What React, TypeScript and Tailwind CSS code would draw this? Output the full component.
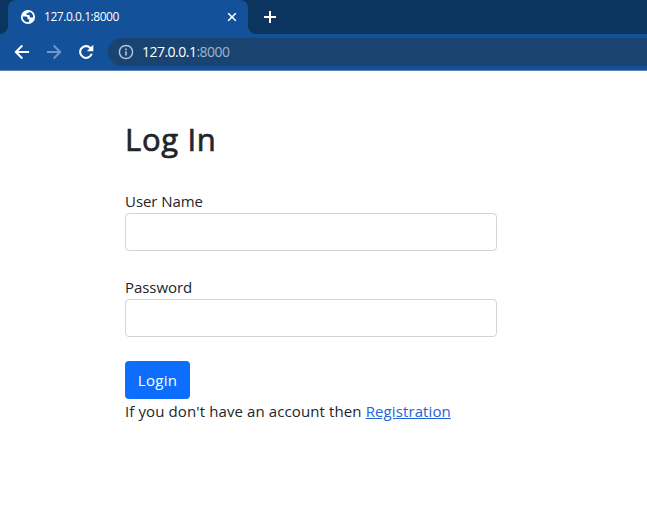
function Icon({ d, className }: { d: string; className: string }) {
  return (
    <svg viewBox="0 0 24 24" fill="currentColor" className={`block shrink-0 ${className}`}>
      <path d={d} />
    </svg>
  );
}

function TabStrip() {
  return (
    <div className="flex h-[34px] bg-[#0b355f]">
      <div className="flex w-2 items-end bg-[#13519a]">
        <div className="h-full w-full rounded-br-lg bg-[#0b355f]" />
      </div>
      <div className="flex w-[240px] items-center rounded-t-lg bg-[#13519a] pl-3 pr-[10px]">
        <svg viewBox="0 0 16 16" className="mr-2 block size-4 shrink-0">
          <circle cx="8" cy="8" r="7.1" fill="#fff" />
          <path
            d="M2.7 7.6H5.2C7 7.6 7.6 8.2 7.6 9.3V10.2H9.2V12.4L8.2 13.3C5 13.4 2.6 11 2.7 7.6ZM9.8 3C8.7 3.1 8.2 3.6 8.2 4.3H6.6V6.1H8.9C9.6 6.1 9.7 6.5 9.7 7.2 9.7 8.1 10.2 8.6 11 8.6H13.2C13.4 5.8 12 3.8 9.8 3Z"
            fill="#13519a"
          />
        </svg>
        <span className="whitespace-nowrap font-['Open_Sans','Noto_Sans',sans-serif] text-[12px] leading-4 tracking-[-0.45px] text-white">
          127.0.0.1:8000
        </span>
        <svg viewBox="0 0 12 12" className="ml-auto block size-3" stroke="#fff" strokeWidth="1.6">
          <path d="m2.2 2.2 7.6 7.6m0-7.6L2.2 9.8" />
        </svg>
      </div>
      <div className="flex flex-1 bg-[#13519a]">
        <div className="flex h-full flex-1 items-center rounded-bl-lg bg-[#0b355f] pl-[15px]">
          <svg viewBox="0 0 14 14" className="block size-[14px]" stroke="#fff" strokeWidth="2">
            <path d="M7 1v12M1 7h12" />
          </svg>
        </div>
      </div>
    </div>
  );
}

function Toolbar() {
  return (
    <div className="flex h-[37px] items-center border-b border-[#5b83b5] bg-[#13519a] pl-3">
      <Icon className="size-5 text-white" d="M20.5 10.8H7.5l5.7-5.7L11.5 3.4 2.9 12l8.6 8.6 1.7-1.7-5.7-5.7h13z" />
      <Icon className="ml-3 size-5 text-[#6f97c8]" d="M3.5 10.8h13l-5.7-5.7 1.7-1.7 8.6 8.6-8.6 8.6-1.7-1.7 5.7-5.7h-13z" />
      <Icon
        className="ml-3 size-5 text-white"
        d="M17.9 6.1A8.3 8.3 0 1 0 20.1 14h-2.6A5.8 5.8 0 1 1 16.1 7.9L13 11h7.8V3.2z"
      />
      <div className="ml-3 flex h-7 flex-1 items-center rounded-l-full bg-[#194472] pl-[10px]">
        <Icon
          className="size-4 text-[#b5c4d8]"
          d="M10.8 6.8h2.4v2.4h-2.4zm0 4h2.4v6.4h-2.4zM12 1a11 11 0 1 0 0 22 11 11 0 0 0 0-22m0 19.8a8.8 8.8 0 1 1 0-17.6 8.8 8.8 0 0 1 0 17.6"
        />
        <span className="ml-2 whitespace-nowrap font-['Open_Sans','Noto_Sans',sans-serif] text-[14px] leading-5 tracking-[-0.52px] text-white">
          127.0.0.1<span className="text-[#9fb5cf]">:8000</span>
        </span>
      </div>
    </div>
  );
}

function Field({ label }: { label: string }) {
  return (
    <div className="mb-6">
      <label className="block h-6 tracking-[-0.06px]">{label}</label>
      <input
        aria-label={label}
        className="block h-[38px] w-[372px] rounded border border-[#ced4da] bg-white px-3 outline-none"
      />
    </div>
  );
}

export default function App() {
  return (
    <div className="h-[520px] w-[647px] overflow-hidden bg-white">
      <TabStrip />
      <Toolbar />
      <main className="pl-[125px] pt-[49px] font-['Open_Sans','Noto_Sans',sans-serif] text-[15px] leading-6 tracking-[0.11px] text-[#212529]">
        <h1 className="mb-[31px] text-[31px] font-medium leading-[38px] tracking-[0.7px] [-webkit-text-stroke:0.7px_#212529]">
          Log In
        </h1>
        <Field label="User Name" />
        <Field label="Password" />
        <button className="block h-[38px] w-[65px] rounded bg-[#0d6efd] tracking-[0.3px] text-white">Login</button>
        <p className="whitespace-nowrap">
          If you don't have an account then{" "}
          <a href="#" className="text-[#2563d9] underline">
            Registration
          </a>
        </p>
      </main>
    </div>
  );
}
